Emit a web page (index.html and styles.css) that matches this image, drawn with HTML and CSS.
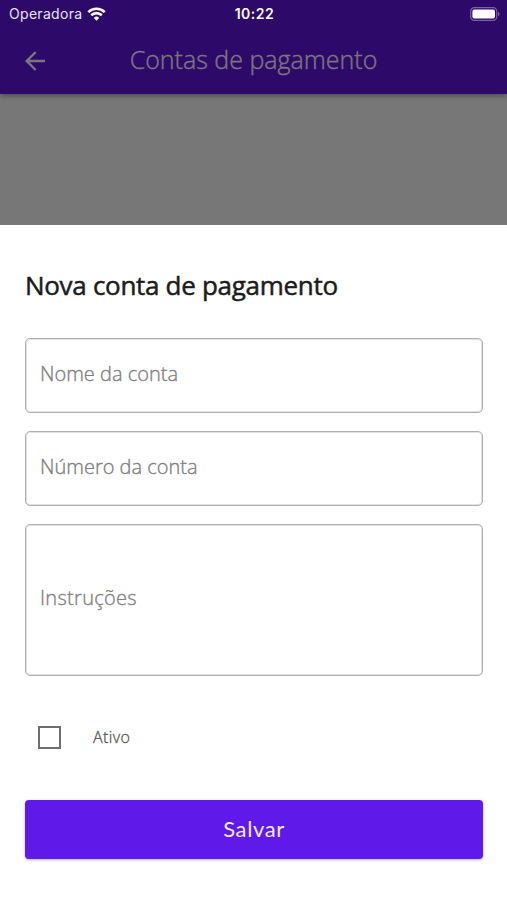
FILE: index.html
```html
<!DOCTYPE html>
<html lang="pt-BR">
<head>
  <meta charset="UTF-8" />
  <meta name="viewport" content="width=device-width, initial-scale=1.0"/>
  <title>Contas de pagamento</title>
  <link rel="stylesheet" href="styles.css">
</head>
<body>
  <div class="screen">
    <header class="app-bar">
      <div class="status-bar">
        <div class="carrier">
          <span class="carrier-name">Operadora</span>
          <svg class="wifi" viewBox="0 0 19 14" fill="none" stroke="#fff" stroke-width="2.6">
            <path d="M1.3 5.1a11.8 11.8 0 0 1 16.4 0"/>
            <path d="M4.2 8.3a7.6 7.6 0 0 1 10.6 0"/>
            <path d="M9.5 13.7l-2.7-2.8a3.9 3.9 0 0 1 5.4 0z" fill="#fff" stroke="none"/>
          </svg>
        </div>
        <span class="clock">10:22</span>
        <svg class="battery" viewBox="0 0 31 14">
          <rect x="0.7" y="0.7" width="26" height="12.6" rx="3.6" fill="none" stroke="#7a62a3" stroke-width="1.2"/>
          <rect x="2.4" y="2.4" width="22.6" height="9.2" rx="2" fill="#fff"/>
          <path d="M28 4.8v4.4c1-.4 1.6-1.2 1.6-2.2s-.6-1.8-1.6-2.2z" fill="#7a62a3"/>
        </svg>
      </div>
      <div class="toolbar">
        <svg class="back" viewBox="0 0 20 20" fill="none" stroke="#7c7580" stroke-width="2.4">
          <path d="M20 10H2M10.7 1L1.7 10l9 9"/>
        </svg>
        <h1>Contas de pagamento</h1>
      </div>
    </header>

    <div class="backdrop"></div>

    <form class="sheet">
      <h2>Nova conta de pagamento</h2>
      <label class="field">Nome da conta</label>
      <label class="field">Número da conta</label>
      <label class="field field-large">Instruções</label>
      <label class="check-row">
        <span class="checkbox"></span>
        <span class="check-label">Ativo</span>
      </label>
      <button type="button" class="save-btn">Salvar</button>
    </form>
  </div>
</body>
</html>
```

FILE: styles.css
```css
* {
  box-sizing: border-box;
  margin: 0;
  padding: 0;
}

body {
  font-family: 'Open Sans', sans-serif;
  background: #fff;
}

.screen {
  display: flex;
  flex-direction: column;
  height: 900px;
  overflow: hidden;
}

.app-bar {
  height: 94px;
  background: #2d0a69;
  box-shadow: 0 2px 5px rgba(0, 0, 0, 0.35);
  z-index: 1;
}

.status-bar {
  display: grid;
  grid-template-columns: 1fr auto 1fr;
  align-items: center;
  height: 27px;
  padding: 0 7px 0 9px;
  font-family: Inter, sans-serif;
  color: #fff;
}

.carrier {
  display: flex;
  align-items: center;
  gap: 5px;
  font-size: 14px;
  letter-spacing: 0.3px;
  color: #e9e2f2;
}

.wifi {
  width: 19px;
  height: 14px;
}

.clock {
  font-size: 14px;
  font-weight: 600;
  letter-spacing: 0.5px;
}

.battery {
  width: 31px;
  height: 14px;
  justify-self: end;
  margin-right: -1px;
}

.toolbar {
  display: grid;
  grid-template-columns: 20px 1fr 20px;
  align-items: center;
  height: 67px;
  padding: 0 25px;
}

.back {
  width: 20px;
  height: 20px;
}

h1 {
  padding-bottom: 4px;
  font-size: 25px;
  font-weight: 300;
  line-height: 34px;
  text-align: center;
  color: #7f7580;
  -webkit-text-stroke: 0.4px #7f7580;
}

.backdrop {
  height: 131px;
  background: #777;
}

.sheet {
  flex: 1;
  display: flex;
  flex-direction: column;
  padding: 41px 24px 0 25px;
  background: #fff;
}

h2 {
  margin-bottom: 34px;
  font-size: 26px;
  font-weight: 400;
  line-height: 38px;
  letter-spacing: -0.3px;
  white-space: nowrap;
  color: #1c1c1c;
  -webkit-text-stroke: 0.5px #1c1c1c;
}

.field {
  display: flex;
  align-items: center;
  height: 75px;
  margin-bottom: 18px;
  padding: 0 14px 4px;
  border: 1px solid #b0b0b0;
  border-radius: 5px;
  box-shadow: inset 0 0 0 1px #e2e2e2;
  font-size: 20px;
  font-weight: 300;
  color: #808080;
  -webkit-text-stroke: 0.35px #808080;
}

.field-large {
  height: 152px;
  padding-bottom: 6px;
  letter-spacing: 0.3px;
}

.check-row {
  display: flex;
  align-items: center;
  gap: 32px;
  height: 38px;
  margin: 24px 0 44px 13px;
}

.checkbox {
  width: 23px;
  height: 23px;
  border: 2px solid #6e6e6e;
}

.check-label {
  font-size: 16px;
  font-weight: 300;
  letter-spacing: 0.4px;
  color: #555;
  -webkit-text-stroke: 0.3px #555;
}

.save-btn {
  height: 59px;
  padding-bottom: 3px;
  border: none;
  border-radius: 4px;
  background: #5f19e9;
  box-shadow: 0 1px 3px rgba(0, 0, 0, 0.3);
  font-family: Lato, sans-serif;
  font-size: 22px;
  letter-spacing: 0.6px;
  color: #f3e9ff;
  cursor: pointer;
}
```
